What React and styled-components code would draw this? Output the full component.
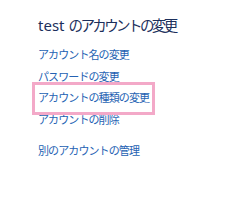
import React from 'react';
import styled, { createGlobalStyle } from 'styled-components';

const GlobalStyle = createGlobalStyle`
  html, body {
    margin: 0;
    padding: 0;
    background: #ffffff;
  }
  body {
    font-family: "Noto Sans", "Noto Sans CJK JP", sans-serif;
  }
`;

const Panel = styled.div`
  width: 236px;
  height: 222px;
  box-sizing: border-box;
  padding: 15px 0 0 38px;
  background: #ffffff;
`;

const Title = styled.h1`
  margin: 0 0 9px 0;
  font-family: "Noto Sans CJK JP", sans-serif;
  font-size: 14.5px;
  line-height: 20px;
  font-weight: 400;
  color: #1c2f5c;
  letter-spacing: -2.6px;
  white-space: nowrap;
`;

const Latin = styled.span`
  font-family: "Noto Sans", sans-serif;
  letter-spacing: 0;
  font-size: 15px;
  margin-right: 4px;
`;

const Links = styled.ul`
  list-style: none;
  margin: 0;
  padding: 0;
  display: flex;
  flex-direction: column;
`;

const Group = styled.li`
  margin-top: ${(p) => (p.$spaced ? '9.5px' : '0')};
`;

const LinkItem = styled.a`
  display: block;
  position: relative;
  font-family: "Noto Sans CJK JP", sans-serif;
  font-size: 11px;
  line-height: 21.5px;
  letter-spacing: -0.9px;
  color: #2562b3;
  text-decoration: none;
  white-space: nowrap;
  cursor: pointer;

  ${(p) =>
    p.$highlight &&
    `
    &::after {
      content: "";
      position: absolute;
      left: -6px;
      top: -5px;
      width: 123px;
      height: 33px;
      box-sizing: border-box;
      border: 3px solid #f3a9c8;
      z-index: 1;
      pointer-events: none;
    }
  `}
`;

const items = [
  'アカウント名の変更',
  'パスワードの変更',
  'アカウントの種類の変更',
  'アカウントの削除',
];

const App = () => {
  return (
    <>
      <GlobalStyle />
      <Panel>
        <Title>
          <Latin>test</Latin>のアカウントの変更
        </Title>
        <Links>
          {items.map((item, index) => (
            <Group key={item}>
              <LinkItem $highlight={index === 2}>{item}</LinkItem>
            </Group>
          ))}
          <Group $spaced>
            <LinkItem>別のアカウントの管理</LinkItem>
          </Group>
        </Links>
      </Panel>
    </>
  );
};

export default App;
